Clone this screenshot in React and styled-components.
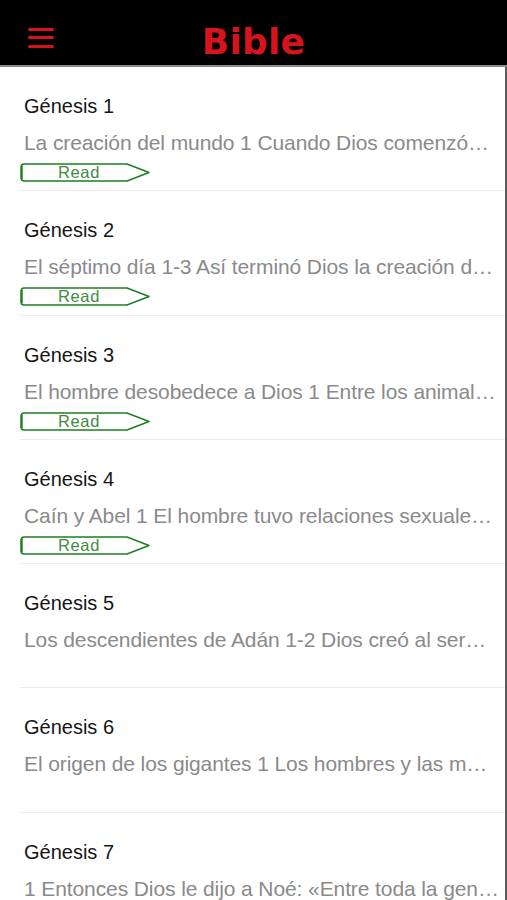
import React from "react";
import styled, { createGlobalStyle } from "styled-components";

const GlobalStyle = createGlobalStyle`
  html, body {
    margin: 0;
    padding: 0;
    background: #ffffff;
    font-family: "Liberation Sans", Arial, sans-serif;
  }
  * { box-sizing: border-box; }
`;

const Page = styled.div`
  width: 507px;
  height: 900px;
  overflow: hidden;
  display: flex;
  flex-direction: column;
  background: #ffffff;
`;

const Header = styled.header`
  height: 67px;
  flex-shrink: 0;
  background: #000;
  border-bottom: 2px solid #8c8c8c;
  display: grid;
  grid-template-columns: 1fr auto 1fr;
  align-items: center;
  padding: 18px 0 0 28px;
`;

const MenuButton = styled.div`
  display: flex;
  flex-direction: column;
  gap: 5.5px;
  width: 26px;
  margin-top: -8px;
  justify-self: start;
`;

const Bar = styled.span`
  display: block;
  height: 3px;
  border-radius: 1.5px;
  background: #d7141d;
`;

const Title = styled.h1`
  margin: 0 0 0 -28px;
  font-family: "DejaVu Sans", Verdana, sans-serif;
  font-weight: 700;
  font-size: 36px;
  line-height: 36px;
  color: #d7141d;
  letter-spacing: 0.2px;
`;

const List = styled.main`
  flex: 1;
  border-right: 2px solid #5c5c5c;
  display: flex;
  flex-direction: column;
`;

const Row = styled.section`
  flex-shrink: 0;
  margin-left: 20px;
  padding: 27px 2px 8.3px 0;
  border-bottom: 1px solid #ececec;
  display: flex;
  flex-direction: column;
`;

const ChapterTitle = styled.h2`
  margin: 0 0 12px 4px;
  font-size: 20px;
  line-height: 24px;
  font-weight: 400;
  color: #161616;
`;

const Description = styled.p`
  margin: 0 0 8px 4px;
  font-size: 21px;
  line-height: 25px;
  letter-spacing: -0.1px;
  color: #8a8a8a;
  white-space: nowrap;
  overflow: hidden;
  text-overflow: ellipsis;
`;

const ReadSlot = styled.div`
  height: 19px;
`;

const ReadButton = styled.button`
  position: relative;
  width: 131px;
  height: 19px;
  padding: 0 13px 0 0;
  margin: 0;
  border: 0;
  background: transparent;
  display: flex;
  align-items: center;
  justify-content: center;
  font-family: "Liberation Sans", Arial, sans-serif;
  font-size: 16.5px;
  letter-spacing: 0.6px;
  color: #428a44;
  cursor: pointer;
`;

const ButtonShape = styled.svg`
  position: absolute;
  inset: 0;
  pointer-events: none;
`;

const ReadLabel = styled.span`
  position: relative;
  line-height: 19px;
`;

const chapters = [
  {
    title: "Génesis 1",
    text: "La creación del mundo 1 Cuando Dios comenzó…",
    read: true,
  },
  {
    title: "Génesis 2",
    text: "El séptimo día 1-3 Así terminó Dios la creación d…",
    read: true,
  },
  {
    title: "Génesis 3",
    text: "El hombre desobedece a Dios 1 Entre los animal…",
    read: true,
  },
  {
    title: "Génesis 4",
    text: "Caín y Abel 1 El hombre tuvo relaciones sexuale…",
    read: true,
  },
  {
    title: "Génesis 5",
    text: "Los descendientes de Adán 1-2 Dios creó al ser…",
    read: false,
  },
  {
    title: "Génesis 6",
    text: "El origen de los gigantes 1 Los hombres y las m…",
    read: false,
  },
  {
    title: "Génesis 7",
    text: "1 Entonces Dios le dijo a Noé: «Entre toda la gen…",
    read: false,
  },
];

function Read() {
  return (
    <ReadButton type="button">
      <ButtonShape width="131" height="19" viewBox="0 0 131 19">
        <path
          d="M4 1 H107 L129 9.5 L107 18 H4 Q1.3 18 1.3 15.5 V3.5 Q1.3 1 4 1 Z"
          fill="none"
          stroke="#1f7f22"
          strokeWidth="1.6"
          strokeLinejoin="round"
        />
        <path d="M1.6 3 V16" stroke="#1f7f22" strokeWidth="2.2" />
      </ButtonShape>
      <ReadLabel>Read</ReadLabel>
    </ReadButton>
  );
}

export default function App() {
  return (
    <>
      <GlobalStyle />
      <Page>
        <Header>
          <MenuButton aria-label="Menu">
            <Bar />
            <Bar />
            <Bar />
          </MenuButton>
          <Title>Bible</Title>
          <div />
        </Header>
        <List>
          {chapters.map((c) => (
            <Row key={c.title}>
              <ChapterTitle>{c.title}</ChapterTitle>
              <Description>{c.text}</Description>
              <ReadSlot>{c.read && <Read />}</ReadSlot>
            </Row>
          ))}
        </List>
      </Page>
    </>
  );
}
